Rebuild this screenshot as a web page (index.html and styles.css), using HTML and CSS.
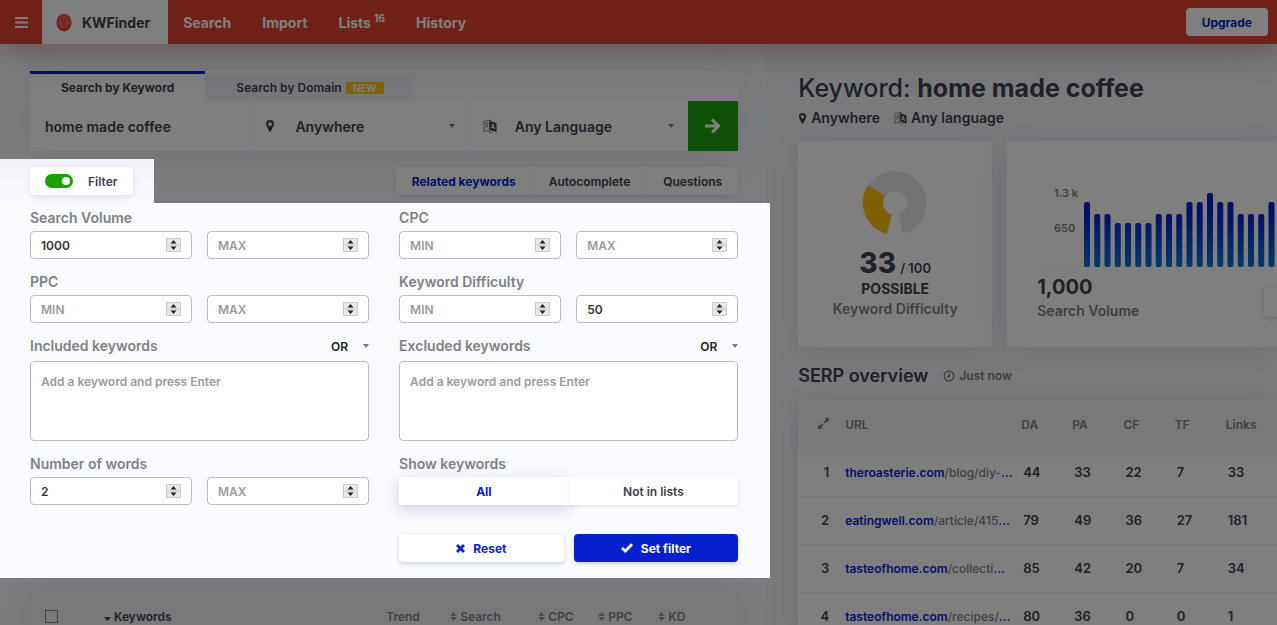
FILE: index.html
```html
<!DOCTYPE html>
<html lang="en">
<head>
    <meta charset="UTF-8">
    <meta name="viewport" content="width=device-width, initial-scale=1.0">
    <title>KWFinder</title>
    <link rel="stylesheet" href="styles.css">
</head>
<body>

    <svg class="sprite" aria-hidden="true">
        <symbol id="pin" viewBox="0 0 10 14">
            <path fill="currentColor" fill-rule="evenodd" d="M5 1a4 4 0 0 0-4 4c0 1 .3 1.600.6 2.200L4.300 12.500c.3.600 1.100.600 1.400 0L8.400 7.200C8.700 6.600 9 6 9 5a4 4 0 0 0-4-4zm0 2.200a1.900 1.900 0 1 1 0 3.800 1.900 1.900 0 0 1 0-3.800z"/>
        </symbol>
        <symbol id="lang" viewBox="0 0 14 14">
            <path fill="none" stroke="currentColor" stroke-opacity=".6" d="M1 2.500L6.500 1v10L1 12.500zM6.500 1l2.500.8M5 12.200l2 1.300 3-.5M2.300 5l3-.8M3.600 3.800v1M5 4.600C4.800 6.500 3.500 8 2.300 8.600M2.700 6.200L5 8.200"/>
            <path fill="currentColor" fill-rule="evenodd" d="M6.500 2L13.500 4v9l-7-2zm3 2.700L7.700 9.400l1 .3.4-1 1.500.4.300 1.200 1 .3-1.500-5.600zm.3 1.500l.5 1.800-1-.3z"/>
        </symbol>
    </svg>

    <header class="topbar">
        <button class="menu-btn" aria-label="Menu">
            <svg width="13" height="11" viewBox="0 0 13 11"><path fill="#fff" d="M0 0h13v2H0zM0 4.500h13v2H0zM0 9h13v2H0z"/></svg>
        </button>
        <a href="#" class="brand">
            <svg width="16" height="19" viewBox="0 0 16 19">
                <ellipse cx="8" cy="9.500" rx="7.500" ry="9" fill="#e0422e"/>
                <g fill="none" stroke="#fff" stroke-opacity=".6" stroke-width=".8" stroke-dasharray="1.500 .8">
                    <path d="M3 12c-1-6 2-8.500 5-8.500s6 3 5 8.500M5 14c-1-5-.5-8.500 3-8.500s4 4 3 8.500M7 15.500c-.8-5-1-7.500 1-7.500s2 3 1.200 7.500M5 2.200h6"/>
                </g>
            </svg>
            KWFinder
        </a>
        <nav class="nav">
            <a href="#">Search</a>
            <a href="#">Import</a>
            <a href="#">Lists <sup>16</sup></a>
            <a href="#">History</a>
        </nav>
        <button class="upgrade">Upgrade</button>
    </header>

    <div class="layout">
        <main class="left">
            <div class="search">
                <div class="search-tabs">
                    <button class="search-tab active">Search by Keyword</button>
                    <button class="search-tab">Search by Domain <span class="badge">NEW</span></button>
                </div>
                <form class="search-row">
                    <input class="search-input" type="text" value="home made coffee" aria-label="Keyword">
                    <label class="search-select">
                        <svg width="11" height="14"><use href="#pin"/></svg>
                        <select aria-label="Location"><option>Anywhere</option></select>
                    </label>
                    <label class="search-select">
                        <svg width="14" height="14"><use href="#lang"/></svg>
                        <select aria-label="Language"><option>Any Language</option></select>
                    </label>
                    <button class="go" type="button" aria-label="Find keywords">
                        <svg width="16" height="16" viewBox="0 0 16 16"><path fill="none" stroke="#fff" stroke-width="3" d="M0 8h13M7 1.500L13.500 8 7 14.500"/></svg>
                    </button>
                </form>
            </div>

            <div class="toolbar">
                <div class="spot">
                    <label class="filter-toggle">
                        <input type="checkbox" checked>
                        Filter
                    </label>
                </div>
                <div class="group">
                    <button class="active">Related keywords</button>
                    <button>Autocomplete</button>
                    <button>Questions</button>
                </div>
            </div>

            <form class="filter">
                <div class="field">
                    <label for="sv-min">Search Volume</label>
                    <div class="range">
                        <input type="number" id="sv-min" placeholder="MIN" value="1000">
                        <input type="number" placeholder="MAX" aria-label="Search Volume max">
                    </div>
                </div>
                <div class="field">
                    <label for="cpc-min">CPC</label>
                    <div class="range">
                        <input type="number" id="cpc-min" placeholder="MIN">
                        <input type="number" placeholder="MAX" aria-label="CPC max">
                    </div>
                </div>
                <div class="field">
                    <label for="ppc-min">PPC</label>
                    <div class="range">
                        <input type="number" id="ppc-min" placeholder="MIN">
                        <input type="number" placeholder="MAX" aria-label="PPC max">
                    </div>
                </div>
                <div class="field">
                    <label for="kd-min">Keyword Difficulty</label>
                    <div class="range">
                        <input type="number" id="kd-min" placeholder="MIN">
                        <input type="number" placeholder="MAX" value="50" aria-label="Keyword Difficulty max">
                    </div>
                </div>
                <div class="field">
                    <div class="field-head">
                        <label for="included">Included keywords</label>
                        <select aria-label="Included mode"><option>OR</option><option>AND</option></select>
                    </div>
                    <textarea id="included" placeholder="Add a keyword and press Enter"></textarea>
                </div>
                <div class="field">
                    <div class="field-head">
                        <label for="excluded">Excluded keywords</label>
                        <select aria-label="Excluded mode"><option>OR</option><option>AND</option></select>
                    </div>
                    <textarea id="excluded" placeholder="Add a keyword and press Enter"></textarea>
                </div>
                <div class="field">
                    <label for="words-min">Number of words</label>
                    <div class="range">
                        <input type="number" id="words-min" placeholder="MIN" value="2">
                        <input type="number" placeholder="MAX" aria-label="Number of words max">
                    </div>
                </div>
                <div class="field">
                    <label id="show-label">Show keywords</label>
                    <div class="switch" role="group" aria-labelledby="show-label">
                        <button type="button" class="active">All</button>
                        <button type="button">Not in lists</button>
                    </div>
                </div>
                <div class="actions">
                    <button type="reset" class="btn">
                        <svg width="9" height="9" viewBox="0 0 9 9"><path stroke="currentColor" stroke-width="2.800" d="M1 1l7 7M8 1L1 8"/></svg>
                        Reset
                    </button>
                    <button type="button" class="btn primary">
                        <svg width="12" height="10" viewBox="0 0 12 10"><path fill="none" stroke="currentColor" stroke-width="2.800" d="M1 5l3.300 3L11 1.300"/></svg>
                        Set filter
                    </button>
                </div>
            </form>

            <table class="keywords">
                <thead>
                    <tr>
                        <th class="c-check"><input type="checkbox" aria-label="Select all"></th>
                        <th class="c-key"><svg width="7" height="4" viewBox="0 0 7 4"><path fill="currentColor" d="M0 0h7L3.500 4z"/></svg> Keywords</th>
                        <th class="c-trend">Trend</th>
                        <th class="c-search"><i class="sort"></i>Search</th>
                        <th class="c-num"><i class="sort"></i>CPC</th>
                        <th class="c-num"><i class="sort"></i>PPC</th>
                        <th class="c-last"><i class="sort"></i>KD</th>
                    </tr>
                </thead>
            </table>
        </main>

        <aside class="right">
            <h1>Keyword: <b>home made coffee</b></h1>
            <p class="meta">
                <span><svg width="9" height="13"><use href="#pin"/></svg> Anywhere</span>
                <span><svg width="13" height="14"><use href="#lang"/></svg> Any language</span>
            </p>

            <div class="cards">
                <section class="card difficulty">
                    <svg width="64" height="64" viewBox="0 0 64 64">
                        <path fill="#e6e7ea" d="M5.300 14A32 32 0 1 1 40.300 62.900L35.100 43.600A12 12 0 1 0 22 25.300z"/>
                        <path fill="#ffc107" d="M23.700 62.900A32 32 0 0 1 5.300 14L22 25.300A12 12 0 0 0 28.900 43.600z"/>
                    </svg>
                    <p class="score"><b>33</b> / 100</p>
                    <p class="rating">POSSIBLE</p>
                    <p class="caption">Keyword Difficulty</p>
                </section>
                <section class="card volume">
                    <svg class="chart" width="100%" height="96">
                        <defs>
                            <linearGradient id="bar" gradientUnits="userSpaceOnUse" x1="0" y1="22" x2="0" y2="96">
                                <stop offset=".3" stop-color="#0620d0"/>
                                <stop offset="1" stop-color="#0674d6"/>
                            </linearGradient>
                        </defs>
                        <path stroke="#f8f8fa" d="M0 .5h400M0 48.500h400M0 95.500h400"/>
                        <text x="17" y="26">1.3 k</text>
                        <text x="17" y="61">650</text>
                        <g id="bars" fill="url(#bar)"></g>
                    </svg>
                    <p class="total">1,000</p>
                    <p class="caption">Search Volume</p>
                    <button class="more" aria-label="More"></button>
                </section>
            </div>

            <div class="serp-head">
                <h2>SERP overview</h2>
                <span>
                    <svg width="12" height="12" viewBox="0 0 12 12"><g fill="none" stroke="currentColor" stroke-width="1.500"><circle cx="6" cy="6" r="4.800"/><path d="M6.300 3v3.500H4"/></g></svg>
                    Just now
                </span>
            </div>

            <table class="serp">
                <thead>
                    <tr>
                        <th class="s-pos"><svg width="11" height="11" viewBox="0 0 11 11"><path fill="currentColor" d="M6.500 0H11v4.500L9.400 3 6.800 5.500l-1.300-1.300L8 1.600zM0 6.500L1.600 8l2.500-2.500 1.300 1.300L3 9.400 4.500 11H0z"/></svg></th>
                        <th class="s-url">URL</th>
                        <th>DA</th>
                        <th>PA</th>
                        <th>CF</th>
                        <th>TF</th>
                        <th>Links</th>
                    </tr>
                </thead>
                <tbody>
                    <tr><td class="s-pos">1</td><td class="s-url"><a href="#">theroasterie.com<span>/blog/diy-</span>...</a></td><td>44</td><td>33</td><td>22</td><td>7</td><td>33</td></tr>
                    <tr><td class="s-pos">2</td><td class="s-url"><a href="#">eatingwell.com<span>/article/415</span>...</a></td><td>79</td><td>49</td><td>36</td><td>27</td><td>181</td></tr>
                    <tr><td class="s-pos">3</td><td class="s-url"><a href="#">tasteofhome.com<span>/collecti</span>...</a></td><td>85</td><td>42</td><td>20</td><td>7</td><td>34</td></tr>
                    <tr><td class="s-pos">4</td><td class="s-url"><a href="#">tasteofhome.com<span>/recipes/</span>...</a></td><td>80</td><td>36</td><td>0</td><td>0</td><td>1</td></tr>
                </tbody>
            </table>
        </aside>
    </div>

    <div class="overlay"></div>

    <script>
        // monthly search volume, bar heights in px
        const volumes = [65, 53, 53, 44, 44, 44, 44, 53, 53, 53, 65, 65, 74, 65, 65, 53, 53, 53, 65, 65];
        const bars = document.getElementById('bars');

        volumes.forEach((height, i) => {
            const bar = document.createElementNS('http://www.w3.org/2000/svg', 'rect');
            bar.setAttribute('x', 47 + i * 10.25);
            bar.setAttribute('y', 96 - height);
            bar.setAttribute('width', 6);
            bar.setAttribute('height', height);
            bar.setAttribute('rx', 2);
            bars.appendChild(bar);
        });
    </script>

</body>
</html>
```
FILE: styles.css
```css
* {
    box-sizing: border-box;
}

body {
    margin: 0;
    height: 100vh;
    overflow: hidden;
    background-color: #fafbfe;
    color: #42424c;
    font-family: 'Inter', 'Open Sans', sans-serif;
    font-size: 13px;
    font-weight: 600;
}

button, input, select, textarea {
    font: inherit;
    color: inherit;
    border: none;
    margin: 0;
    outline: none;
}

button {
    cursor: pointer;
    background: #fff;
    padding: 0;
}

a {
    color: inherit;
    text-decoration: none;
}

h1, h2, p {
    margin: 0;
}

.sprite {
    display: none;
}

/* dims everything except the filter */
.overlay {
    position: fixed;
    inset: 0;
    z-index: 5;
    background-color: rgba(0, 0, 0, 0.5);
}

/* top bar */
.topbar {
    position: relative;
    z-index: 1;
    display: flex;
    align-items: center;
    height: 44px;
    padding-right: 9px;
    background-color: #e0422e;
    color: #fff;
    font-size: 14px;
    font-weight: 700;
    box-shadow: 0 4px 24px rgba(224, 66, 46, 0.3), 0 10px 40px rgba(60, 60, 90, 0.2);
}

.menu-btn {
    width: 42px;
    height: 44px;
    background: none;
}

.brand {
    display: flex;
    align-items: center;
    gap: 10px;
    height: 44px;
    padding: 0 18px 0 14px;
    background-color: #fff;
    color: #42424c;
}

.nav {
    display: flex;
    gap: 31px;
    flex: 1;
    padding-left: 15px;
}

.nav sup {
    font-size: 10px;
    line-height: 0;
}

.upgrade {
    padding: 0 16px;
    height: 28px;
    border-radius: 4px;
    color: #0620d0;
    font-size: 12px;
    font-weight: 700;
}

.layout {
    display: grid;
    grid-template-columns: minmax(0, 3fr) minmax(0, 2fr);
}

/* left column */
.left {
    padding: 27px 28px 0 30px;
}

.search {
    box-shadow: 0 10px 40px rgba(60, 70, 110, 0.12);
}

.search-tabs {
    display: flex;
    align-items: flex-end;
}

.search-tab {
    height: 27px;
    padding: 0 31px;
    background-color: #eef0f5;
    font-size: 12px;
}

.search-tab.active {
    height: 30px;
    border-top: 3px solid #0620d0;
    background-color: #fff;
    font-weight: 700;
}

.badge {
    margin-left: 1px;
    padding: 0 7px;
    border-radius: 2px;
    background-color: #ffc107;
    color: #fff;
    font-size: 10px;
    font-weight: 700;
}

.search-row {
    display: grid;
    grid-template-columns: 1fr 1fr 1fr 50px;
    height: 50px;
    background-color: #fff;
    font-size: 14px;
}

.search-input {
    min-width: 0;
    padding: 0 15px;
    background: none;
}

.search-select {
    display: flex;
    align-items: center;
    gap: 18px;
    padding-left: 12px;
    border-left: 2px solid #f8f9fc;
}

.search-select svg {
    width: 14px;
    flex: none;
}

select {
    appearance: none;
    background: url("data:image/svg+xml,%3Csvg xmlns='http://www.w3.org/2000/svg' width='6' height='4'%3E%3Cpath fill='%23777' d='M0 0h6L3 4z'/%3E%3C/svg%3E") no-repeat right center;
}

.search-select select {
    flex: 1;
    height: 50px;
    background-position: right 14px center;
}

.go {
    display: grid;
    place-items: center;
    background-color: #1ca00a;
}

.toolbar {
    display: flex;
    justify-content: space-between;
    align-items: center;
    margin-top: 8px;
    height: 44px;
}

.spot {
    position: relative;
    z-index: 6;
    height: 44px;
    margin-left: -30px;
    padding: 8px 21px 8px 30px;
    background: linear-gradient(#f1f3f8, #fafbfe);
}

.filter-toggle {
    display: flex;
    align-items: center;
    gap: 15px;
    height: 28px;
    padding: 0 15px;
    border-radius: 4px;
    background-color: #fff;
    font-size: 12px;
    box-shadow: 0 2px 6px rgba(60, 70, 110, 0.15);
}

.filter-toggle input {
    appearance: none;
    display: flex;
    justify-content: flex-end;
    width: 28px;
    height: 14px;
    padding: 3px;
    border-radius: 7px;
    background-color: #1ca00a;
}

.filter-toggle input::after {
    content: "";
    width: 8px;
    height: 8px;
    border-radius: 50%;
    background-color: #fff;
}

.group {
    display: flex;
    gap: 1px;
    height: 28px;
    border-radius: 4px;
    background-color: #f4f5f9;
    box-shadow: 0 2px 6px rgba(60, 70, 110, 0.15);
    font-size: 12px;
}

.group button {
    padding: 0 16px;
}

.group .active {
    color: #0620d0;
    font-weight: 700;
}

.group button:first-child {
    border-radius: 4px 0 0 4px;
}

.group button:last-child {
    border-radius: 0 4px 4px 0;
}

/* filter panel */
.filter {
    position: relative;
    z-index: 6;
    display: grid;
    grid-template-columns: repeat(2, minmax(0, 1fr));
    gap: 13px 30px;
    margin: 0 -32px 0 -30px;
    padding: 5px 32px 16px 30px;
    background-color: #fafbfe;
}

.field label {
    display: block;
    line-height: 20px;
    margin-bottom: 3px;
    color: #808084;
    font-size: 14px;
}

.range {
    display: flex;
    gap: 15px;
}

.range input {
    flex: 1;
    min-width: 0;
    height: 28px;
    padding: 0 10px;
}

.range input, .field textarea {
    border: 1px solid #bbbcc2;
    border-radius: 4px;
    background-color: #fff;
    font-size: 12px;
    color: #333;
}

.range input::placeholder, .field textarea::placeholder {
    color: #999ba0;
}

.range input::-webkit-inner-spin-button {
    appearance: none;
    opacity: 1;
    width: 15px;
    height: 14px;
    background: url("data:image/svg+xml,%3Csvg xmlns='http://www.w3.org/2000/svg' width='15' height='14'%3E%3Cpath fill='%23e8e9ec' stroke='%23c8c9cc' d='M.5.5h14v13H.5zM0 7h15'/%3E%3Cpath fill='%23222' d='M4.500 5.500h6L7.500 2zM4.500 8.500h6L7.500 12z'/%3E%3C/svg%3E");
}

.field-head {
    display: flex;
    justify-content: space-between;
    margin-bottom: 5px;
}

.field-head label {
    margin: 0;
}

.field-head select {
    width: 38px;
    height: 20px;
    background-color: transparent;
    color: #222;
    font-size: 12px;
}

.field textarea {
    display: block;
    width: 100%;
    height: 80px;
    padding: 12px 10px;
    resize: none;
}

.switch {
    display: grid;
    grid-template-columns: 1fr 1fr;
    height: 28px;
    font-size: 12px;
}

.switch button {
    box-shadow: 0 2px 3px rgba(60, 70, 110, 0.12);
}

.switch .active {
    color: #0620d0;
    font-weight: 700;
    box-shadow: 0 4px 14px rgba(40, 50, 150, 0.22);
}

.actions {
    grid-column: 2;
    display: grid;
    grid-template-columns: 1fr 1fr;
    gap: 10px;
    padding-top: 16px;
}

.btn {
    display: flex;
    justify-content: center;
    align-items: center;
    gap: 8px;
    height: 28px;
    border-radius: 4px;
    color: #0620d0;
    font-size: 12px;
    font-weight: 700;
    box-shadow: 0 2px 4px rgba(40, 50, 150, 0.2);
}

.btn.primary {
    background-color: #0620d0;
    color: #fff;
}

/* keyword table header */
.keywords {
    width: 100%;
    margin-top: 14px;
    table-layout: fixed;
    border-collapse: collapse;
    background-color: #f2f3f7;
    color: #808084;
    box-shadow: 0 0 30px rgba(60, 70, 110, 0.15);
}

.keywords th {
    height: 48px;
    padding: 0;
    text-align: left;
    font-size: 12px;
    font-weight: 600;
}

.keywords .c-check {
    width: 74px;
    padding-left: 15px;
}

.c-check input {
    appearance: none;
    display: block;
    width: 13px;
    height: 13px;
    border: 1px solid #808084;
}

.keywords .c-key {
    color: #42424c;
}

.keywords .c-trend {
    width: 64px;
}

.keywords .c-search {
    width: 88px;
}

.keywords .c-num {
    width: 60px;
}

.keywords .c-last {
    width: 80px;
}

.sort {
    display: inline-block;
    width: 7px;
    height: 9px;
    margin-right: 3px;
    background: url("data:image/svg+xml,%3Csvg xmlns='http://www.w3.org/2000/svg' width='7' height='9'%3E%3Cpath fill='%23999' d='M0 4h7L3.500 0zM0 5h7L3.500 9z'/%3E%3C/svg%3E");
}

/* right column */
.right {
    min-height: 100vh;
    padding: 28px 0 0 32px;
    background-color: #f3f5f8;
}

.right h1 {
    font-size: 25px;
    line-height: 32px;
    font-weight: 500;
    white-space: nowrap;
}

.right h1 b {
    font-weight: 700;
}

.meta {
    display: flex;
    gap: 14px;
    margin: 2px 0 11px;
    line-height: 24px;
    font-size: 14px;
}

.meta span {
    display: flex;
    align-items: center;
    gap: 4px;
}

.cards {
    display: grid;
    grid-template-columns: 194px 1fr;
    gap: 15px;
}

.card {
    position: relative;
    height: 206px;
    padding-top: 30px;
    background-color: #fff;
    box-shadow: 0 4px 30px rgba(60, 70, 110, 0.12);
}

.difficulty {
    text-align: center;
}

.difficulty svg {
    display: block;
    margin: 0 auto 12px;
}

.score {
    display: flex;
    justify-content: center;
    align-items: baseline;
    gap: 4px;
    height: 32px;
    font-size: 13px;
}

.score b {
    font-size: 28px;
    font-weight: 800;
    line-height: 32px;
}

.rating {
    font-size: 14px;
    font-weight: 700;
    line-height: 20px;
}

.caption {
    color: #808084;
    font-size: 14px;
    line-height: 20px;
}

.volume {
    padding-left: 30px;
    overflow: hidden;
}

.chart {
    display: block;
    margin-bottom: 6px;
}

.chart text {
    fill: #808084;
    font-size: 11px;
}

.total {
    font-size: 20px;
    font-weight: 700;
    line-height: 28px;
}

.more {
    position: absolute;
    right: -16px;
    bottom: 30px;
    width: 29px;
    height: 29px;
    border-radius: 4px;
    box-shadow: 0 1px 5px rgba(60, 70, 110, 0.25);
}

.serp-head {
    display: flex;
    align-items: center;
    gap: 15px;
    margin: 17px 0 12px;
    line-height: 24px;
}

.serp-head h2 {
    font-size: 18px;
    font-weight: 600;
}

.serp-head span {
    display: flex;
    align-items: center;
    gap: 4px;
    color: #808084;
    font-size: 12px;
}

.serp {
    width: 100%;
    table-layout: fixed;
    border-collapse: collapse;
    background-color: #fff;
    box-shadow: 0 4px 30px rgba(60, 70, 110, 0.12);
}

.serp th, .serp td {
    height: 48px;
    padding: 0 0 0 2px;
    text-align: left;
}

.serp th {
    padding-left: 0;
    background-color: #f1f3f7;
    color: #808084;
    font-size: 12px;
    font-weight: 600;
}

.serp thead {
    box-shadow: 0 4px 12px rgba(60, 70, 110, 0.08);
}

.serp td {
    border-bottom: 1px solid #eeeff2;
}

.serp .s-pos {
    width: 47px;
    padding-right: 16px;
    text-align: right;
}

.serp .s-url {
    width: 176px;
    padding-left: 0;
    white-space: nowrap;
}

.serp a {
    color: #0620d0;
    font-size: 12px;
}

.serp a span {
    color: #808084;
    font-weight: 500;
}
```
